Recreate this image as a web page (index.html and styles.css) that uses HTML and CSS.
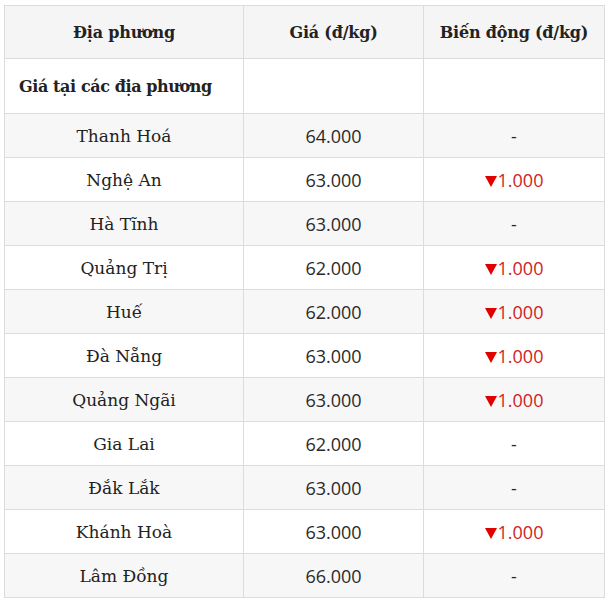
FILE: index.html
```html
<!DOCTYPE html>
<html lang="vi">
<head>
<meta charset="utf-8">
<link rel="stylesheet" href="styles.css">
</head>
<body>
<table class="price-table">
  <colgroup>
    <col class="col-place">
    <col class="col-price">
    <col class="col-change">
  </colgroup>
  <thead>
    <tr class="head-row">
      <th>Địa phương</th>
      <th>Giá (đ/kg)</th>
      <th>Biến động (đ/kg)</th>
    </tr>
  </thead>
  <tbody>
    <tr class="group-row">
      <td class="group-title">Giá tại các địa phương</td>
      <td></td>
      <td></td>
    </tr>
    <tr class="alt"><td>Thanh Hoá</td><td class="num">64.000</td><td class="num">-</td></tr>
    <tr><td>Nghệ An</td><td class="num">63.000</td><td class="num down"><svg class="tri" viewBox="0 0 12 11"><polygon points="0,0 12,0 6,11"/></svg>1.000</td></tr>
    <tr class="alt"><td>Hà Tĩnh</td><td class="num">63.000</td><td class="num">-</td></tr>
    <tr><td>Quảng Trị</td><td class="num">62.000</td><td class="num down"><svg class="tri" viewBox="0 0 12 11"><polygon points="0,0 12,0 6,11"/></svg>1.000</td></tr>
    <tr class="alt"><td>Huế</td><td class="num">62.000</td><td class="num down"><svg class="tri" viewBox="0 0 12 11"><polygon points="0,0 12,0 6,11"/></svg>1.000</td></tr>
    <tr><td>Đà Nẵng</td><td class="num">63.000</td><td class="num down"><svg class="tri" viewBox="0 0 12 11"><polygon points="0,0 12,0 6,11"/></svg>1.000</td></tr>
    <tr class="alt"><td>Quảng Ngãi</td><td class="num">63.000</td><td class="num down"><svg class="tri" viewBox="0 0 12 11"><polygon points="0,0 12,0 6,11"/></svg>1.000</td></tr>
    <tr><td>Gia Lai</td><td class="num">62.000</td><td class="num">-</td></tr>
    <tr class="alt"><td>Đắk Lắk</td><td class="num">63.000</td><td class="num">-</td></tr>
    <tr><td>Khánh Hoà</td><td class="num">63.000</td><td class="num down"><svg class="tri" viewBox="0 0 12 11"><polygon points="0,0 12,0 6,11"/></svg>1.000</td></tr>
    <tr class="alt"><td>Lâm Đồng</td><td class="num">66.000</td><td class="num">-</td></tr>
  </tbody>
</table>
</body>
</html>
```

FILE: styles.css
```css
html, body {
  background: #ffffff;
}
body {
  margin: 5px 0 0 4px;
  font-family: "DejaVu Serif", "Liberation Serif", serif;
  color: #222222;
}
.price-table {
  border-collapse: collapse;
  width: 600px;
  table-layout: fixed;
}
.col-place { width: 239px; }
.col-price { width: 180px; }
.col-change { width: 181px; }

.price-table th,
.price-table td {
  border: 1px solid #dcdcdc;
  text-align: center;
  padding: 0 8px;
  font-size: 17px;
  font-weight: normal;
}
.head-row {
  background: #f5f5f5;
  height: 53px;
}
.head-row th {
  font-weight: bold;
  font-size: 16px;
  letter-spacing: -0.2px;
  color: #222222;
}
.group-row .group-title {
  text-align: left;
  font-weight: bold;
  font-size: 16px;
  letter-spacing: -0.4px;
  padding-left: 14px;
}
.price-table tbody tr {
  height: 44px;
}
.price-table tbody tr.group-row {
  height: 55px;
}
.price-table tr.alt {
  background: #f7f7f7;
}
.num {
  font-family: "Open Sans", "Liberation Sans", sans-serif;
  color: #2a2a2a;
}
.price-table .num {
  font-size: 18px;
}
.down {
  color: #cc1f1f;
}
.tri {
  display: inline-block;
  width: 12px;
  height: 11px;
  margin-right: 1px;
  vertical-align: 0;
  fill: #e00000;
}
```
